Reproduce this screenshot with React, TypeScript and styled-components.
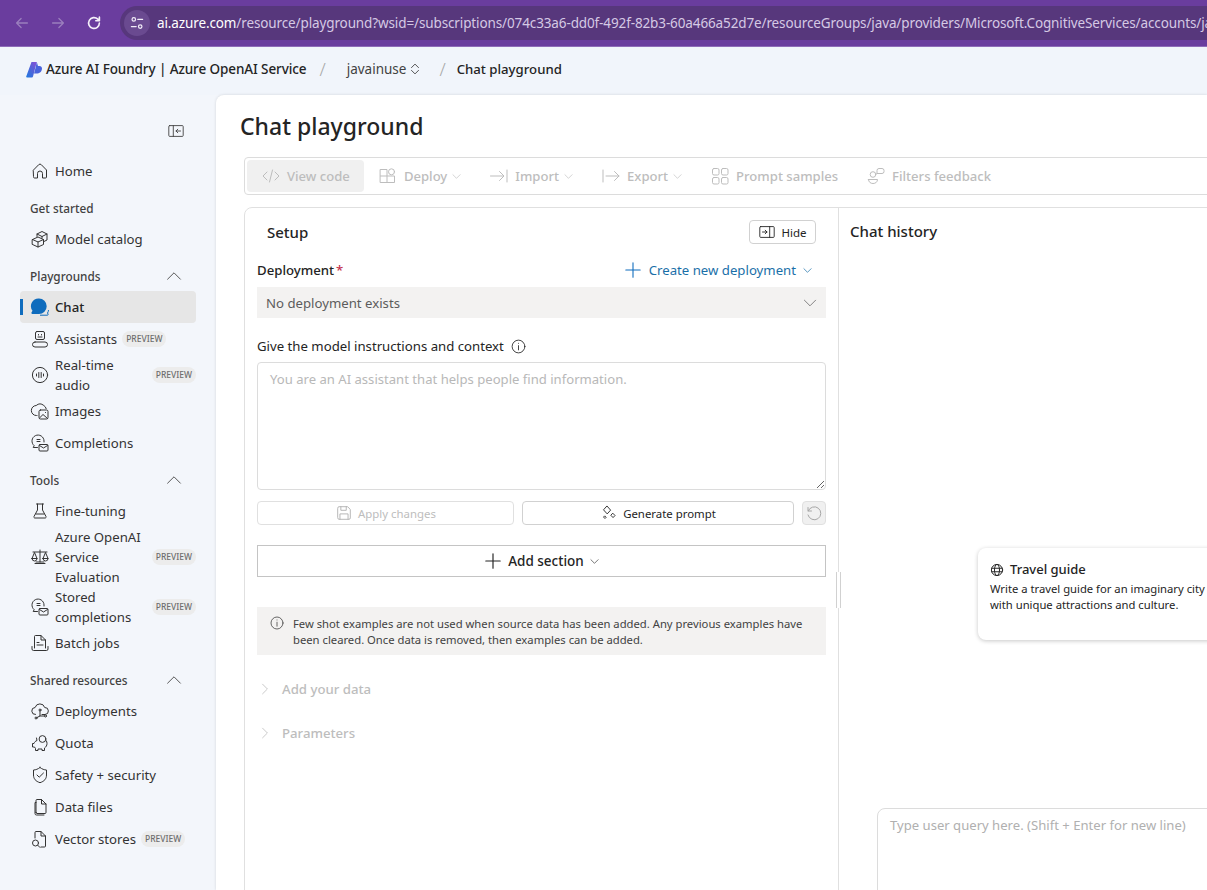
import React from "react";
import styled, { createGlobalStyle } from "styled-components";

const GlobalStyle = createGlobalStyle`
  html, body {
    margin: 0;
    height: 100%;
    overflow: hidden;
    background: #f3f6fb;
  }
  body, button, textarea {
    font-family: "Noto Sans", "Open Sans", sans-serif;
  }
  * {
    box-sizing: border-box;
  }
`;

// 20x20 line icon
const Ico: React.FC<{ size?: number; color?: string; width?: number; children: React.ReactNode }> = ({
  size = 20,
  color = "currentColor",
  width = 1,
  children,
}) => (
  <svg
    width={size}
    height={size}
    viewBox="0 0 20 20"
    fill="none"
    stroke={color}
    strokeWidth={width}
    strokeLinecap="round"
    strokeLinejoin="round"
    style={{ flex: "none" }}
  >
    {children}
  </svg>
);

const Chevron: React.FC<{ size?: number; color?: string; up?: boolean }> = ({ size = 10, color, up }) => (
  <Ico size={size} color={color} width={size < 12 ? 1.6 : 1.1}>
    <path d={up ? "M2 14 L10 6 L18 14" : "M2 6 L10 14 L18 6"} />
  </Ico>
);

const Home = () => (
  <Ico>
    <path d="M3.5 9 8.7 3.7a1.8 1.8 0 0 1 2.6 0L16.5 9v7a1 1 0 0 1-1 1h-3v-4.5a2.5 2.5 0 0 0-5 0V17h-3a1 1 0 0 1-1-1z" />
  </Ico>
);
const Cubes = () => (
  <Ico>
    <path d="M7 7.5V5l5-2.5 5 2.5v6l-3 1.5" />
    <path d="M7 5l5 2.5L17 5M12 7.5V9" />
    <path d="M2.5 10.5 8 8l5.5 2.5v5L8 18l-5.5-2.5zM2.5 10.5 8 13l5.5-2.5M8 13v5" />
  </Ico>
);
const ChatFilled = () => (
  <svg width="20" height="20" viewBox="0 0 20 20" style={{ flex: "none" }}>
    <path
      d="M9 1.5a7.7 7.7 0 0 1 0 15.4H2.2c-.8 0-1.1-.8-.7-1.4l1-1.7A7.7 7.7 0 0 1 9 1.5z"
      fill="#0f6cbd"
    />
    <path d="M10 18.2h7.4c.7 0 .9-.5.7-1l-.6-1.2c.6-.9 1-1.9 1-3" fill="none" stroke="#0f6cbd" strokeWidth="1" />
  </svg>
);
const Robot = () => (
  <Ico>
    <rect x="5.5" y="2.5" width="9" height="8" rx="1.5" />
    <path d="M8.5 5.5v.5M11.500 5.500v.5M8 8h4" />
    <path d="M5 13h10a2.500 2.500 0 0 1 0 5H5a2.500 2.500 0 0 1 0-5z" />
  </Ico>
);
const Audio = () => (
  <Ico>
    <circle cx="10" cy="10" r="7.6" />
    <path d="M6.5 9v2M8.8 7.500v5M11.2 7.500v5M13.5 9v2" />
  </Ico>
);
const Images = () => (
  <Ico>
    <path d="M7 14.5H6.5a5 5 0 0 1-.3-10 5.8 5.8 0 0 1 7.600 0 5 5 0 0 1 2.400 3.200" />
    <rect x="9" y="9" width="9" height="9" rx="1.5" />
    <path d="m9.5 17 3.500-3.500 4.500 4M15.5 11.500v.1" />
  </Ico>
);
const Completions = () => (
  <Ico>
    <path d="M7.5 14.5H3.2l1-1.800a6 6 0 1 1 9.800-4.700v1" />
    <path d="M7 6.5h3M7 8.5h3" />
    <rect x="9" y="11.5" width="9" height="6.5" rx="1" />
    <path d="m9.5 12.5 4 2.500 4-2.500" />
  </Ico>
);
const Flask = () => (
  <Ico>
    <path d="M6.5 3h7M7.5 3v6L4 15.500A1 1 0 0 0 5 17h10a1 1 0 0 0 1-1.500L12.500 9V3M6 13h8" />
  </Ico>
);
const Scale = () => (
  <Ico>
    <path d="M3 5h14M10 3v12M5 16.5h10M6 15h8" />
    <path d="M2 11.5 4.500 5.500 7 11.500a2.500 2.500 0 0 1-5 0zM2 11.500h5M13 11.500l2.500-6 2.500 6a2.500 2.500 0 0 1-5 0zM13 11.500h5" />
  </Ico>
);
const Batch = () => (
  <Ico>
    <path d="M4.5 15V3.500a1 1 0 0 1 1-1H11l4.500 4.500v8" />
    <path d="M11 2.5V7h4.500M7 9.500h2M7 12h6" />
    <path d="M2 13.5V16a1.500 1.500 0 0 0 1.500 1.500h13A1.500 1.500 0 0 0 18 16v-2.500" />
  </Ico>
);
const CloudNodes = () => (
  <Ico>
    <path d="M5.5 13.5a3.500 3.500 0 0 1-.4-7 5 5 0 0 1 9.600 0 3.500 3.500 0 0 1 .3 7h-3" />
    <path d="M10 10v5l-3 1.500M10 15h4.500" />
    <circle cx="10" cy="9" r="1" />
    <circle cx="6" cy="17" r="1" />
    <circle cx="15.5" cy="15" r="1" />
  </Ico>
);
const Piggy = () => (
  <Ico>
    <path d="M6.5 5 7 7.500C5.500 8 4.500 9 4 10.500H2.500v3.500H4.500l1 1.500V17.500h2.500v-1.500h4v1.500h2.500v-2.500c1.500-1 2.500-2.500 2.500-4.500 0-1-.2-2-.7-2.800" />
    <circle cx="12.5" cy="6" r="3.4" />
  </Ico>
);
const Shield = () => (
  <Ico>
    <path d="M10 2.5c2 1.600 4.200 2.400 6.500 2.500v5c0 3.800-2.200 6.300-6.500 7.700-4.300-1.400-6.500-3.900-6.500-7.700V5C5.800 4.900 8 4.100 10 2.500z" />
    <path d="m7 10 2.200 2.200L13.500 8" />
  </Ico>
);
const FileIco = () => (
  <Ico>
    <path d="M6 15.5v-12a1 1 0 0 1 1-1h4.500l4.500 4.500v8.500a1 1 0 0 1-1 1H7a1 1 0 0 1-1-1z" />
    <path d="M11.5 2.500V7H16" />
    <path d="M6 5.500H5v11a1.500 1.500 0 0 0 1.500 1.500H14" />
  </Ico>
);
const VectorFile = () => (
  <Ico>
    <path d="M5 9V3.500a1 1 0 0 1 1-1h5l4.500 4.500v10a1 1 0 0 1-1 1H11" />
    <path d="M11 2.500V7h4.500" />
    <circle cx="5.5" cy="14" r="3" />
    <path d="m7.800 16.300 2.200 2.200" />
  </Ico>
);

interface NavEntry {
  label: string;
  icon: React.ReactNode;
  preview?: boolean;
  active?: boolean;
}

interface NavSection {
  title?: string;
  collapsible?: boolean;
  items: NavEntry[];
}

const sections: NavSection[] = [
  { items: [{ label: "Home", icon: <Home /> }] },
  { title: "Get started", items: [{ label: "Model catalog", icon: <Cubes /> }] },
  {
    title: "Playgrounds",
    collapsible: true,
    items: [
      { label: "Chat", icon: <ChatFilled />, active: true },
      { label: "Assistants", icon: <Robot />, preview: true },
      { label: "Real-time\naudio", icon: <Audio />, preview: true },
      { label: "Images", icon: <Images /> },
      { label: "Completions", icon: <Completions /> },
    ],
  },
  {
    title: "Tools",
    collapsible: true,
    items: [
      { label: "Fine-tuning", icon: <Flask /> },
      { label: "Azure OpenAI\nService\nEvaluation", icon: <Scale />, preview: true },
      { label: "Stored\ncompletions", icon: <Completions />, preview: true },
      { label: "Batch jobs", icon: <Batch /> },
    ],
  },
  {
    title: "Shared resources",
    collapsible: true,
    items: [
      { label: "Deployments", icon: <CloudNodes /> },
      { label: "Quota", icon: <Piggy /> },
      { label: "Safety + security", icon: <Shield /> },
      { label: "Data files", icon: <FileIco /> },
      { label: "Vector stores", icon: <VectorFile />, preview: true },
    ],
  },
];

const toolbarItems: { label: string; icon: React.ReactNode; menu?: boolean }[] = [
  {
    label: "Deploy",
    menu: true,
    icon: (
      <Ico>
        <path d="M2.5 3.500h6.500v13H2.500zM2.500 10h14v6.500H9" />
        <circle cx="13.5" cy="5.8" r="3" />
      </Ico>
    ),
  },
  {
    label: "Import",
    menu: true,
    icon: (
      <Ico>
        <path d="M1.5 10h13M10.500 5.500l4.500 4.500-4.500 4.500M18 4v12" />
      </Ico>
    ),
  },
  {
    label: "Export",
    menu: true,
    icon: (
      <Ico>
        <path d="M2 4v12M5 10h13M13.500 5.500 18 10l-4.500 4.500" />
      </Ico>
    ),
  },
  {
    label: "Prompt samples",
    icon: (
      <Ico>
        <rect x="2.5" y="2.5" width="6.5" height="6.5" rx="1.5" />
        <rect x="11.5" y="2.5" width="6.5" height="6.5" rx="1.5" />
        <rect x="2.5" y="11.5" width="6.5" height="6.5" rx="1.5" />
        <rect x="11.5" y="11.5" width="6.5" height="6.5" rx="1.5" />
      </Ico>
    ),
  },
  {
    label: "Filters feedback",
    icon: (
      <Ico>
        <circle cx="7" cy="8.5" r="2.8" />
        <path d="M2.5 13.500h9c0 2.500-2 4-4.500 4s-4.500-1.500-4.500-4z" />
        <path d="M11 7V4.500A2 2 0 0 1 13 2.500h3a2 2 0 0 1 2 2v1a2 2 0 0 1-2 2h-5z" />
      </Ico>
    ),
  },
];

export default function App() {
  return (
    <Page>
      <GlobalStyle />
      <BrowserBar>
        <NavGlyph $dim>
          <Ico size={18} width={1.4}>
            <path d="M16 10H4M9 5l-5 5 5 5" />
          </Ico>
        </NavGlyph>
        <NavGlyph $dim>
          <Ico size={18} width={1.4}>
            <path d="M4 10h12M11 5l5 5-5 5" />
          </Ico>
        </NavGlyph>
        <NavGlyph>
          <Ico size={18} width={1.8}>
            <path d="M16 10a6 6 0 1 1-1.800-4.300L16 7.500M16 3.500v4h-4" />
          </Ico>
        </NavGlyph>
        <AddressPill>
          <SiteInfo>
            <Ico size={16} width={1.5}>
              <circle cx="6" cy="5.5" r="2.2" />
              <path d="M11 5.500h6M3 14.500h6" />
              <circle cx="14" cy="14.5" r="2.2" />
            </Ico>
          </SiteInfo>
          <UrlText>
            <b>ai.azure.com</b>
            /resource/playground?wsid=/subscriptions/074c33a6-dd0f-492f-82b3-60a466a52d7e/resourceGroups/java/providers/Microsoft.CognitiveServices/accounts/ja
          </UrlText>
        </AddressPill>
      </BrowserBar>

      <TopBar>
        <svg width="16" height="17" viewBox="0 0 16 17" style={{ flex: "none" }}>
          <defs>
            <linearGradient id="fl" x1="0" y1="1" x2="1" y2="0">
              <stop offset="0" stopColor="#1f7ae0" />
              <stop offset="0.6" stopColor="#5a5fd8" />
              <stop offset="1" stopColor="#8a4fd6" />
            </linearGradient>
          </defs>
          <path d="M5.5 1h5.300L7 15.500a1.200 1.200 0 0 1-1.100.9H1a.8.8 0 0 1-.7-1.100z" fill="url(#fl)" />
          <path d="M10.8 1 12 5h1.500c1.500 0 2.500 1 2.500 2.500 0 3-2.500 5-5.500 5H8L9.500 7z" fill="#4a63dc" />
        </svg>
        <BrandText>Azure AI Foundry | Azure OpenAI Service</BrandText>
        <Slash>/</Slash>
        <CrumbText>javainuse</CrumbText>
        <Ico size={14} color="#424242" width={1.3}>
          <path d="M5 8l5-5 5 5M5 12l5 5 5-5" />
        </Ico>
        <Slash>/</Slash>
        <CrumbCurrent>Chat playground</CrumbCurrent>
      </TopBar>

      <Body>
        <Sidebar>
          <CollapseRow>
            <Ico color="#424242" size={18}>
              <rect x="2" y="4" width="16" height="12" rx="1" />
              <path d="M7 4v12M15 10h-5M12 8l-2 2 2 2" />
            </Ico>
          </CollapseRow>
          {sections.map((section, i) => (
            <div key={i}>
              {section.title && (
                <SectionTitle>
                  {section.title}
                  {section.collapsible && <Chevron size={16} up color="#424242" />}
                </SectionTitle>
              )}
              {section.items.map((item) => (
                <NavRow key={item.label} $active={item.active}>
                  {item.icon}
                  <NavLabel>{item.label}</NavLabel>
                  {item.preview && <PreviewBadge $push={item.label.includes("\n")}>PREVIEW</PreviewBadge>}
                </NavRow>
              ))}
            </div>
          ))}
        </Sidebar>

        <Main>
          <PageTitle>Chat playground</PageTitle>
          <Toolbar>
            <ToolItem $selected>
              <Ico>
                <path d="M6 6l-4 4 4 4M14 6l4 4-4 4M11.500 4l-3 12" />
              </Ico>
              View code
            </ToolItem>
            {toolbarItems.map((t) => (
              <ToolItem key={t.label}>
                {t.icon}
                {t.label}
                {t.menu && (
                  <MenuCaret>
                    <Chevron size={9} color="#c4c4c4" />
                  </MenuCaret>
                )}
              </ToolItem>
            ))}
          </Toolbar>

          <Workspace>
            <SetupPane>
              <SetupHead>
                <SetupTitle>Setup</SetupTitle>
                <HideButton>
                  <Ico size={18} color="#242424">
                    <rect x="2" y="4" width="16" height="12" rx="1" />
                    <path d="M13 4v12M5 10h5M8 8l2 2-2 2" />
                  </Ico>
                  Hide
                </HideButton>
              </SetupHead>

              <DeployRow>
                <FieldLabel>
                  Deployment<Required>*</Required>
                </FieldLabel>
                <CreateLink>
                  <Ico size={18} width={1.2}>
                    <path d="M10 2v16M2 10h16" />
                  </Ico>
                  <span>Create new deployment</span>
                  <Chevron size={9} />
                </CreateLink>
              </DeployRow>
              <SelectBox>
                No deployment exists
                <Chevron size={14} color="#616161" />
              </SelectBox>

              <InstructionLabel>
                Give the model instructions and context
                <Ico size={17} color="#242424">
                  <circle cx="10" cy="10" r="7.5" />
                  <path d="M10 9v5M10 6.200v.1" />
                </Ico>
              </InstructionLabel>
              <PromptArea placeholder="You are an AI assistant that helps people find information." />

              <ActionRow>
                <ActionButton $disabled>
                  <Ico size={18} color="#b0b0b0">
                    <path d="M3 4.500A1.500 1.500 0 0 1 4.500 3h9.500L17 6v9.500a1.500 1.500 0 0 1-1.500 1.500h-11A1.500 1.500 0 0 1 3 15.500z" />
                    <path d="M6.5 3v4h6V3M5.500 17v-6h9v6" />
                  </Ico>
                  Apply changes
                </ActionButton>
                <ActionButton>
                  <Ico size={18} color="#242424">
                    <path d="M8 2.500l3.800 4.300L8 11 4.200 6.800zM14.500 10.500l2.200 2.300-2.200 2.300-2.200-2.300zM5.500 13.500l1.300 1.300-1.300 1.300-1.300-1.300z" />
                  </Ico>
                  Generate prompt
                </ActionButton>
                <ResetButton>
                  <Ico size={20} color="#a6a6a6">
                    <path d="M4 4.500v3.500h3.500M4.200 8A6.500 6.500 0 1 1 4 12" />
                  </Ico>
                </ResetButton>
              </ActionRow>

              <AddSection>
                <Ico size={18} width={1.3}>
                  <path d="M10 2v16M2 10h16" />
                </Ico>
                Add section
                <Chevron size={9} color="#424242" />
              </AddSection>

              <InfoNote>
                <Ico size={16} color="#424242">
                  <circle cx="10" cy="10" r="7.5" />
                  <path d="M10 9v5M10 6.200v.1" />
                </Ico>
                <span>
                  Few shot examples are not used when source data has been added. Any previous examples have been
                  cleared. Once data is removed, then examples can be added.
                </span>
              </InfoNote>

              <Accordion $first>
                <Ico size={16} color="#bdbdbd">
                  <path d="M7 4l6 6-6 6" />
                </Ico>
                Add your data
              </Accordion>
              <Accordion>
                <Ico size={16} color="#bdbdbd">
                  <path d="M7 4l6 6-6 6" />
                </Ico>
                Parameters
              </Accordion>
              <SplitHandle />
            </SetupPane>

            <ChatPane>
              <ChatTitle>Chat history</ChatTitle>
              <SampleCard>
                <CardHead>
                  <Ico size={14} color="#242424" width={1.4}>
                    <circle cx="10" cy="10" r="8" />
                    <ellipse cx="10" cy="10" rx="3.6" ry="8" />
                    <path d="M2.500 7.500h15M2.500 12.500h15" />
                  </Ico>
                  Travel guide
                </CardHead>
                <CardText>Write a travel guide for an imaginary city with unique attractions and culture.</CardText>
              </SampleCard>
              <QueryBox placeholder="Type user query here. (Shift + Enter for new line)" />
            </ChatPane>
          </Workspace>
        </Main>
      </Body>
    </Page>
  );
}

const Page = styled.div`
  width: 1207px;
  height: 890px;
  display: flex;
  flex-direction: column;
  overflow: hidden;
`;

const BrowserBar = styled.div`
  height: 47px;
  flex: none;
  display: flex;
  align-items: center;
  padding: 0 0 1px 13px;
  background: #6a3d9e;
  border-bottom: 1px solid #8e6cb8;
`;

const NavGlyph = styled.div<{ $dim?: boolean }>`
  width: 18px;
  height: 18px;
  margin-right: 18px;
  color: ${(p) => (p.$dim ? "#9a7fbd" : "#f4f0f9")};
`;

const AddressPill = styled.div`
  flex: 1;
  min-width: 0;
  height: 34px;
  margin-left: -1px;
  display: flex;
  align-items: center;
  gap: 7px;
  padding-left: 4px;
  background: #57377c;
  border-radius: 17px 0 0 17px;
  overflow: hidden;
`;

const SiteInfo = styled.div`
  width: 26px;
  height: 26px;
  flex: none;
  display: flex;
  align-items: center;
  justify-content: center;
  border-radius: 50%;
  background: #6a4a90;
  color: #f2edf8;
`;

const UrlText = styled.div`
  font-size: 13.5px;
  color: #d5c9e4;
  white-space: nowrap;
  letter-spacing: -0.12px;

  b {
    font-weight: 400;
    color: #ffffff;
  }
`;

const TopBar = styled.div`
  height: 48px;
  flex: none;
  display: flex;
  align-items: center;
  padding: 0 0 4px 26px;
  background: #f1f5fb;
  color: #242424;
  font-size: 13.5px;
`;

const BrandText = styled.span`
  margin: 0 -4px 0 4px;
  font-weight: 500;
  letter-spacing: -0.1px;
  white-space: nowrap;
`;

const Slash = styled.span`
  margin: 0 11px 0 17px;
  color: #a8a8a8;
  font-size: 18px;
  font-weight: 300;
`;

const CrumbText = styled.span`
  margin: 0 2px 0 10px;
  color: #424242;
`;

const CrumbCurrent = styled.span`
  font-weight: 500;
  font-size: 13.2px;
`;

const Body = styled.div`
  flex: 1;
  min-height: 0;
  display: flex;
`;

const Sidebar = styled.nav`
  width: 216px;
  flex: none;
  padding: 0 20px;
  background: #f3f6fb;
  color: #333333;
`;

const CollapseRow = styled.div`
  height: 60px;
  padding: 27px 11px 0 0;
  display: flex;
  justify-content: flex-end;
  align-items: flex-start;
`;

const SectionTitle = styled.div`
  height: 36px;
  padding: 5px 14px 0 10px;
  display: flex;
  align-items: center;
  justify-content: space-between;
  font-size: 11.8px;
  font-weight: 500;
  color: #424242;
`;

const NavRow = styled.div<{ $active?: boolean }>`
  position: relative;
  min-height: 32px;
  padding-left: 10px;
  display: flex;
  align-items: center;
  gap: 5px;
  font-size: 13.2px;
  line-height: 20px;
  border-radius: 4px;
  background: ${(p) => (p.$active ? "#e6e6e6" : "transparent")};
  font-weight: ${(p) => (p.$active ? 500 : 400)};
  color: ${(p) => (p.$active ? "#242424" : "#333333")};

  &::before {
    content: "";
    display: ${(p) => (p.$active ? "block" : "none")};
    position: absolute;
    left: 0;
    top: 8px;
    width: 3px;
    height: 16px;
    background: #0f6cbd;
  }
`;

const NavLabel = styled.span`
  white-space: pre;
`;

const PreviewBadge = styled.span<{ $push?: boolean }>`
  margin-left: ${(p) => (p.$push ? "auto" : "0")};
  padding: 0 4px;
  height: 16px;
  display: flex;
  align-items: center;
  border-radius: 8px;
  background: #ececec;
  color: #6e6e6e;
  font-size: 8.5px;
  font-weight: 500;
`;

const Main = styled.main`
  flex: 1;
  min-width: 0;
  padding: 15px 0 0 24px;
  background: #ffffff;
  border-top-left-radius: 8px;
  box-shadow: 0 0 3px rgba(0, 0, 0, 0.14);
  overflow: hidden;
`;

const PageTitle = styled.h1`
  margin: 0 0 15px;
  font-size: 23px;
  line-height: 32px;
  font-weight: 500;
  color: #242424;
`;

const Toolbar = styled.div`
  width: 1100px;
  height: 38px;
  margin-left: 4px;
  padding: 2px;
  display: flex;
  border: 1px solid #dcdcdc;
  border-radius: 4px;
`;

const ToolItem = styled.div<{ $selected?: boolean }>`
  height: 32px;
  padding: 0 14px;
  display: flex;
  align-items: center;
  gap: 6px;
  border-radius: 4px;
  background: ${(p) => (p.$selected ? "#f0f0f0" : "transparent")};
  color: #bdbdbd;
  font-size: 13.1px;
  font-weight: 500;
  white-space: nowrap;
`;

const MenuCaret = styled.span`
  display: flex;
  margin-left: -1px;
`;

const Workspace = styled.div`
  width: 1100px;
  height: 700px;
  margin: 12px 0 0 4px;
  display: flex;
  border: 1px solid #e0e0e0;
  border-radius: 8px 0 0 0;
`;

const SetupPane = styled.section`
  position: relative;
  width: 594px;
  flex: none;
  padding: 12px 12px 0;
  border-right: 1px solid #e0e0e0;
`;

const SetupHead = styled.div`
  display: flex;
  align-items: center;
  justify-content: space-between;
  height: 24px;
  padding: 0 10px;
`;

const SetupTitle = styled.h2`
  margin: 0;
  font-size: 15px;
  font-weight: 500;
  color: #242424;
`;

const HideButton = styled.button`
  width: 67px;
  height: 24px;
  padding: 0;
  display: flex;
  align-items: center;
  justify-content: center;
  gap: 5px;
  background: #ffffff;
  border: 1px solid #d1d1d1;
  border-radius: 4px;
  color: #242424;
  font-size: 11.5px;
`;

const DeployRow = styled.div`
  height: 20px;
  margin-top: 16px;
  display: flex;
  align-items: center;
  justify-content: space-between;
`;

const FieldLabel = styled.label`
  font-size: 13.2px;
  font-weight: 500;
  color: #242424;
`;

const Required = styled.span`
  margin-left: 2px;
  color: #c4314b;
`;

const CreateLink = styled.div`
  display: flex;
  align-items: center;
  gap: 7px;
  padding-right: 14px;
  color: #1a6fa8;
  font-size: 13.2px;

  svg:first-child {
    color: #0f6cbd;
  }
`;

const SelectBox = styled.div`
  height: 31px;
  margin-top: 7px;
  padding: 0 9px;
  display: flex;
  align-items: center;
  justify-content: space-between;
  background: #f3f2f1;
  color: #5c5c5c;
  font-size: 13.2px;
`;

const InstructionLabel = styled.div`
  height: 20px;
  margin-top: 18px;
  display: flex;
  align-items: center;
  gap: 6px;
  font-size: 13.2px;
  color: #242424;
`;

const PromptArea = styled.textarea`
  display: block;
  width: 100%;
  height: 128px;
  margin-top: 6px;
  padding: 7px 12px;
  border: 1px solid #dcdcdc;
  border-radius: 4px;
  outline: none;
  font-size: 13.1px;
  line-height: 18px;

  &::placeholder {
    color: #b8b8b8;
  }
`;

const ActionRow = styled.div`
  height: 24px;
  margin-top: 11px;
  display: grid;
  grid-template-columns: 257px 272px 24px;
  gap: 8px;
`;

const ActionButton = styled.button<{ $disabled?: boolean }>`
  padding: 0;
  display: flex;
  align-items: center;
  justify-content: center;
  gap: 5px;
  background: #ffffff;
  border: 1px solid ${(p) => (p.$disabled ? "#e0e0e0" : "#d1d1d1")};
  border-radius: 4px;
  color: ${(p) => (p.$disabled ? "#bdbdbd" : "#242424")};
  font-size: 11.4px;
`;

const ResetButton = styled.button`
  padding: 0;
  display: flex;
  align-items: center;
  justify-content: center;
  background: #f0f0f0;
  border: 1px solid #e0e0e0;
  border-radius: 4px;
`;

const AddSection = styled.button`
  width: 100%;
  height: 32px;
  margin-top: 20px;
  padding: 0;
  display: flex;
  align-items: center;
  justify-content: center;
  gap: 6px;
  background: #ffffff;
  border: 1px solid #c4c4c4;
  color: #242424;
  font-size: 13.5px;
  font-weight: 500;
`;

const InfoNote = styled.div`
  height: 48px;
  margin-top: 30px;
  padding: 1px 12px 0;
  display: flex;
  align-items: center;
  gap: 8px;
  background: #f3f2f1;
  color: #424242;
  font-size: 11.25px;
  line-height: 16px;

  svg {
    align-self: flex-start;
    margin-top: 7px;
  }
`;

const Accordion = styled.div<{ $first?: boolean }>`
  height: 40px;
  margin-top: ${(p) => (p.$first ? "14px" : "4px")};
  display: flex;
  align-items: center;
  gap: 9px;
  color: #bdbdbd;
  font-size: 13.2px;
  font-weight: 500;
`;

const SplitHandle = styled.div`
  position: absolute;
  top: 364px;
  right: -3px;
  width: 5px;
  height: 36px;
  background: #ffffff;
  border-left: 1px solid #d1d1d1;
  border-right: 1px solid #d1d1d1;
`;

const ChatPane = styled.section`
  flex: 1;
  min-width: 0;
  padding: 13px 0 0 11px;
`;

const ChatTitle = styled.h2`
  margin: 0;
  font-size: 15px;
  line-height: 20px;
  font-weight: 500;
  color: #242424;
`;

const SampleCard = styled.div`
  width: 300px;
  height: 92px;
  margin: 307px 0 0 128px;
  padding: 13px 12px;
  border-radius: 8px;
  background: #ffffff;
  box-shadow: 0 1px 4px rgba(0, 0, 0, 0.22);
`;

const CardHead = styled.div`
  display: flex;
  align-items: center;
  gap: 6px;
  margin-bottom: 3px;
  font-size: 13px;
  line-height: 17px;
  font-weight: 500;
  color: #242424;
`;

const CardText = styled.p`
  margin: 0;
  max-width: 225px;
  font-size: 11.25px;
  line-height: 16px;
  color: #242424;
`;

const QueryBox = styled.textarea`
  display: block;
  width: 560px;
  height: 120px;
  margin: 168px 0 0 27px;
  padding: 7px 12px;
  border: 1px solid #dcdcdc;
  border-radius: 8px;
  outline: none;
  resize: none;
  font-size: 13.1px;
  line-height: 18px;

  &::placeholder {
    color: #b0b0b0;
  }
`;
